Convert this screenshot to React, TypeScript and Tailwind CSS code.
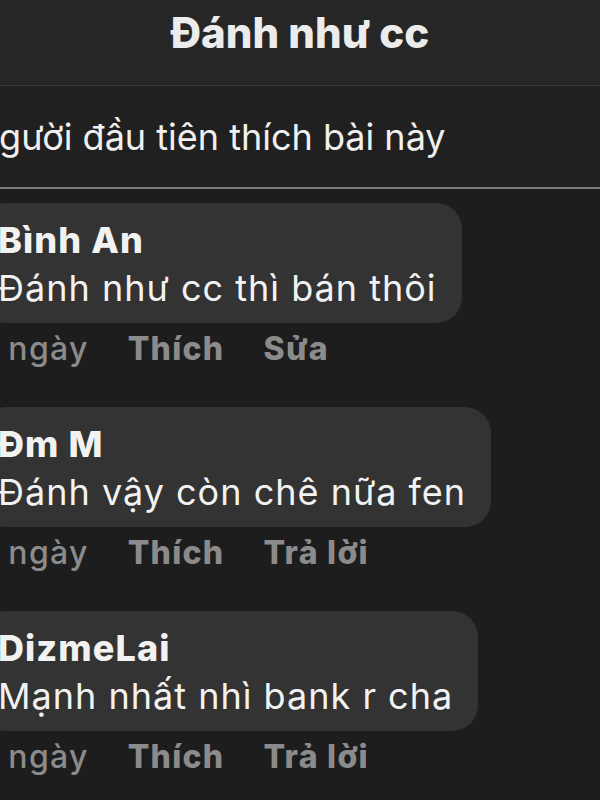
const comments = [
  { id: 1, name: "Bình An", text: "Đánh như cc thì bán thôi", action: "Sửa" },
  { id: 2, name: "Đm M", text: "Đánh vậy còn chê nữa fen", action: "Trả lời" },
  { id: 3, name: "DizmeLai", text: "Mạnh nhất nhì bank r cha", action: "Trả lời" },
];

function Comment({ name, text, action }: { name: string; text: string; action: string }) {
  return (
    <div className="flex flex-col items-start">
      <div className="-ml-[20px] rounded-[26px] bg-[#333333] pb-[11px] pl-[18px] pr-[25px] pt-[13px]">
        <div className="whitespace-nowrap text-[36px] font-extrabold leading-[48px] tracking-[0.03em] text-[#f2f2f2]">
          {name}
        </div>
        <div className="whitespace-nowrap text-[36px] leading-[48px] tracking-[0.028em] text-[#f2f2f2]">
          {text}
        </div>
      </div>
      <div className="-ml-[16px] mb-[40px] mt-[8px] flex gap-[39px] whitespace-nowrap text-[32px] leading-[36px] tracking-[0.04em] text-[#8b8b8b]">
        <span className="font-medium">1 ngày</span>
        <span className="font-extrabold">Thích</span>
        <span className="font-extrabold">{action}</span>
      </div>
    </div>
  );
}

export default function App() {
  return (
    <div className="h-[800px] w-[600px] overflow-hidden bg-[#1d1d1d] font-['Inter',sans-serif]">
      <header className="flex h-[86px] items-center justify-center border-b border-[#3a3a3a] bg-[#262626] pb-[20px]">
        <h1 className="text-[42px] font-extrabold text-[#ececec]">Đánh như cc</h1>
      </header>

      <div className="flex h-[103px] items-center border-b-2 border-[#7a7a7a] bg-[#202020]">
        <p className="-ml-[28px] whitespace-nowrap text-[36px] text-[#f0f0f0]">
          Người đầu tiên thích bài này
        </p>
      </div>

      <div className="pt-[14px]">
        {comments.map((c) => (
          <Comment key={c.id} name={c.name} text={c.text} action={c.action} />
        ))}
      </div>
    </div>
  );
}
